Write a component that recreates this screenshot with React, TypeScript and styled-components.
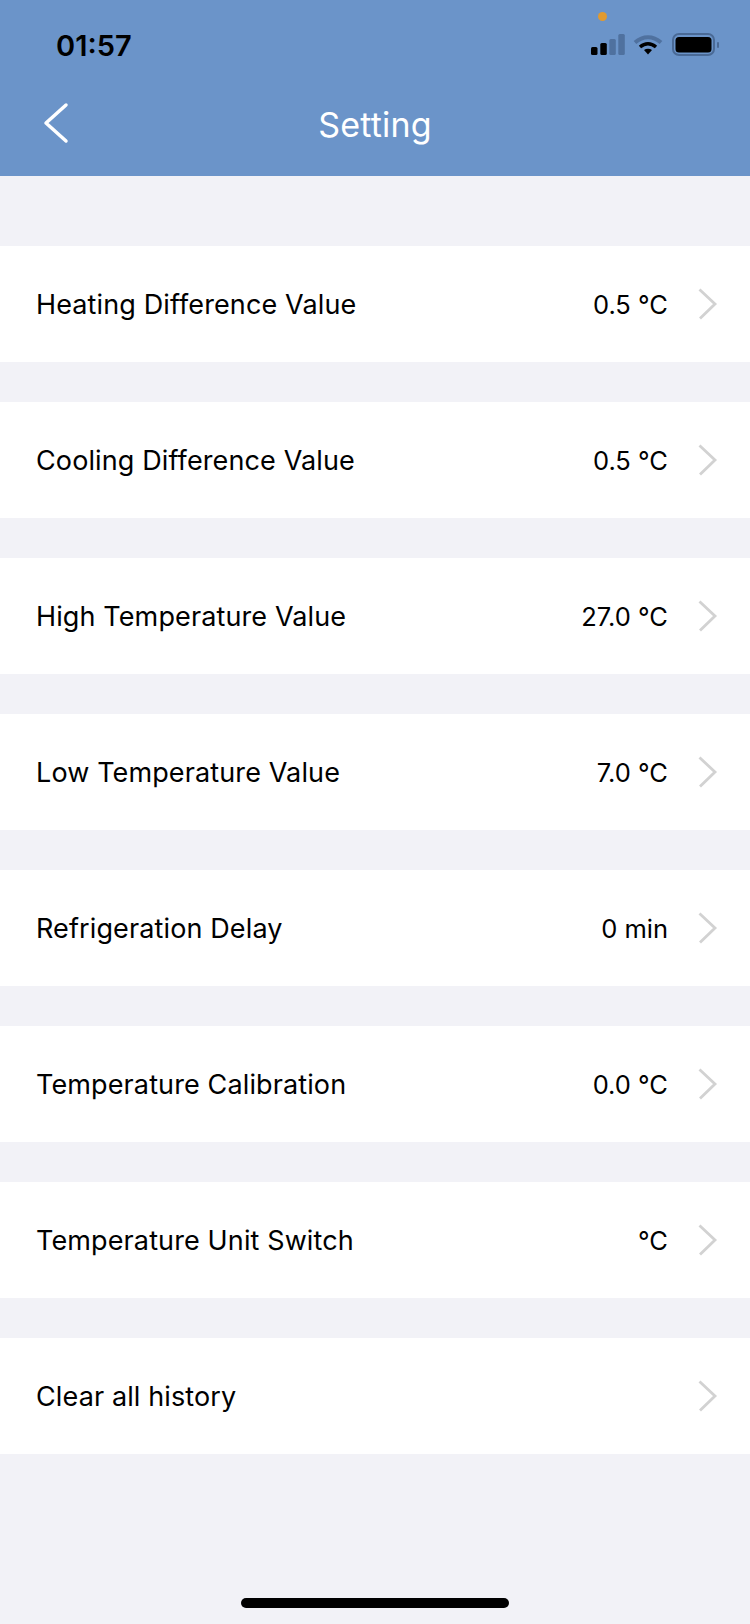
import { createGlobalStyle } from 'styled-components';
import styled from 'styled-components';

const GlobalStyle = createGlobalStyle`
  html, body {
    margin: 0;
    padding: 0;
    background: #f2f2f7;
  }
`

const Page = styled.div`
  width: 750px;
  height: 1624px;
  display: flex;
  flex-direction: column;
  overflow: hidden;
  background: #f2f2f7;
  font-family: Inter, "Liberation Sans", sans-serif;
  color: #000;
`

const Header = styled.header`
  height: 176px;
  flex: none;
  background: #6b94c9;
  display: flex;
  flex-direction: column;
`

const StatusBar = styled.div`
  height: 90px;
  padding: 0 30px 0 56px;
  display: flex;
  align-items: center;
  justify-content: space-between;
  position: relative;
`

const Clock = styled.span`
  font-size: 29px;
  font-weight: 600;
  color: #000;
`

const OrangeDot = styled.span`
  position: absolute;
  left: 598px;
  top: 12px;
  width: 9px;
  height: 9px;
  border-radius: 50%;
  background: #e09a30;
`

const NavBar = styled.div`
  flex: 1;
  position: relative;
  display: flex;
  align-items: center;
  justify-content: center;
  padding-bottom: 18px;
`

const BackIcon = styled.svg`
  position: absolute;
  left: 41px;
  top: 12px;
`

const Title = styled.h1`
  margin: 0;
  font-size: 34px;
  font-weight: 400;
  letter-spacing: 0.2px;
  color: #fff;
`

const List = styled.div`
  display: flex;
  flex-direction: column;
  gap: 40px;
  margin-top: 70px;
`

const Row = styled.div`
  height: 116px;
  padding: 0 30px 0 36px;
  display: flex;
  align-items: center;
  background: #fff;
`

const Label = styled.span`
  flex: 1;
  margin-top: 2px;
  font-size: 27px;
  font-weight: 400;
  letter-spacing: 0.12px;
  line-height: 32px;
  color: #000;
`

const Value = styled.span`
  margin-top: 2px;
  font-size: 25.5px;
  line-height: 32px;
  color: #000;
`

const Chevron = styled.svg`
  margin-left: 30px;
  flex: none;
`

const HomeBar = styled.div`
  width: 268px;
  height: 10px;
  margin: auto auto 16px;
  border-radius: 5px;
  background: #000;
`

const rows = [
  { label: 'Heating Difference Value', value: '0.5 °C' },
  { label: 'Cooling Difference Value', value: '0.5 °C' },
  { label: 'High Temperature Value', value: '27.0 °C' },
  { label: 'Low Temperature Value', value: '7.0 °C' },
  { label: 'Refrigeration Delay', value: '0 min' },
  { label: 'Temperature Calibration', value: '0.0 °C' },
  { label: 'Temperature Unit Switch', value: '°C' },
  { label: 'Clear all history', value: '' },
]

const StatusIcons = () => (
  <svg width="130" height="26" viewBox="0 0 130 26">
    <rect x="1" y="15" width="6.500" height="8" rx="1.500" fill="#000" />
    <rect x="10.300" y="11" width="6.500" height="12" rx="1.500" fill="#000" />
    <rect x="19.300" y="7" width="6.500" height="16" rx="1.500" fill="#4f719f" />
    <rect x="28.300" y="2" width="6.500" height="21" rx="1.500" fill="#4f719f" />
    <path d="M45 10.500C53 3.500 63 3.500 71 10.500" fill="none" stroke="#4f719f" strokeWidth="4" />
    <path d="M50 15C55 10.800 61 10.800 66 15" fill="none" stroke="#000" strokeWidth="3.500" />
    <path d="M54 18C56.500 16.200 59.500 16.200 62 18L58 22.500Z" fill="#000" />
    <rect x="83" y="2" width="41" height="21" rx="6" fill="none" stroke="#4a6a96" strokeWidth="2" />
    <rect x="85.500" y="5" width="36" height="15.500" rx="3.500" fill="#000" />
    <rect x="127" y="10" width="2" height="6" rx="1" fill="#4a6a96" />
  </svg>
)

const App = () => {
  return (
    <Page>
      <GlobalStyle />
      <Header>
        <StatusBar>
          <Clock>01:57</Clock>
          <OrangeDot />
          <StatusIcons />
        </StatusBar>
        <NavBar>
          <BackIcon width="28" height="42" viewBox="0 0 28 42">
            <path d="M25 3L5 21L25 39" fill="none" stroke="#fff" strokeWidth="3.500" strokeLinecap="round" strokeLinejoin="round" />
          </BackIcon>
          <Title>Setting</Title>
        </NavBar>
      </Header>
      <List>
        {rows.map((row) => (
          <Row key={row.label}>
            <Label>{row.label}</Label>
            <Value>{row.value}</Value>
            <Chevron width="22" height="32" viewBox="0 0 22 32">
              <path d="M1.500 1.500L17 16L2 30.500" fill="none" stroke="#d2d2d2" strokeWidth="2.800" />
            </Chevron>
          </Row>
        ))}
      </List>
      <HomeBar />
    </Page>
  )
}

export default App
